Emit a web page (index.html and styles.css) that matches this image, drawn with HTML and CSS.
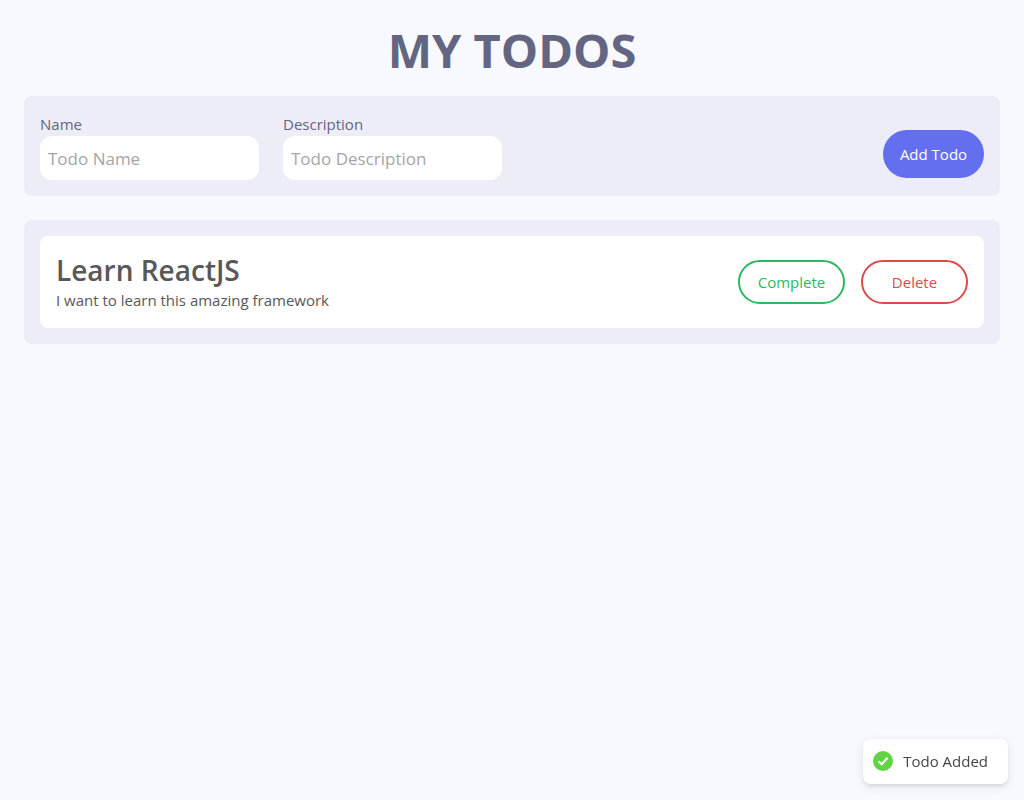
FILE: index.html
```html
<!DOCTYPE html>
<html lang="en">
<head>
<meta charset="utf-8">
<title>My Todos</title>
<link rel="stylesheet" href="styles.css">
</head>
<body>
<main class="app">
  <h1 class="title">MY TODOS</h1>
  <form class="panel todo-form">
    <div class="fields">
      <div class="field">
        <label for="name">Name</label>
        <input id="name" type="text" placeholder="Todo Name">
      </div>
      <div class="field">
        <label for="description">Description</label>
        <input id="description" type="text" placeholder="Todo Description">
      </div>
    </div>
    <button class="button add" type="button">Add Todo</button>
  </form>
  <section class="panel">
    <article class="todo">
      <div class="todo-text">
        <h2>Learn ReactJS</h2>
        <p>I want to learn this amazing framework</p>
      </div>
      <div class="actions">
        <button class="button outline complete" type="button">Complete</button>
        <button class="button outline delete" type="button">Delete</button>
      </div>
    </article>
  </section>
</main>
<div class="toast" role="status">
  <svg class="toast-icon" viewBox="0 0 20 20" aria-hidden="true">
    <circle cx="10" cy="10" r="10" fill="#61d345"/>
    <path d="M5.5 10.2 L8.6 13.2 L14.6 6.8" fill="none" stroke="#fff" stroke-width="2"/>
  </svg>
  <span>Todo Added</span>
</div>
</body>
</html>
```
FILE: styles.css
```css
* { box-sizing: border-box; }
body {
  margin: 0;
  min-height: 100vh;
  background: #f8f9ff;
  color: #646681;
  font-family: "Segoe UI", "Open Sans", "Noto Sans", sans-serif;
  font-size: 15px;
  line-height: 24px;
}
h1, h2, p { margin: 0; }
.app { padding: 24px; }
.title {
  margin-bottom: 20px;
  font-size: 47px;
  font-weight: 700;
  line-height: 52px;
  text-align: center;
}
.panel {
  margin-bottom: 24px;
  padding: 16px;
  border-radius: 8px;
  background: #ecedf6;
}
.todo-form {
  display: flex;
  align-items: center;
  justify-content: space-between;
}
.fields { display: flex; gap: 24px; }
.field { display: flex; flex-direction: column; }
.field input {
  width: 219px;
  height: 44px;
  padding: 8px;
  border: 0;
  border-radius: 12px;
  background: #fff;
  color: #585858;
  font: inherit;
  font-size: 17px;
}
.field input::placeholder { color: #a5a5a8; opacity: 1; }
.button {
  border-radius: 24px;
  font: inherit;
  cursor: pointer;
}
.add {
  min-width: 101px;
  height: 48px;
  margin-top: 16px;
  padding: 0 16px;
  border: 0;
  background: #646ff0;
  color: #fff;
}
.todo {
  display: flex;
  align-items: center;
  justify-content: space-between;
  padding: 16px;
  border-radius: 8px;
  background: #fff;
  color: #585858;
}
.todo h2 { font-size: 28px; font-weight: 600; line-height: 36px; }
.actions { display: flex; gap: 16px; }
.outline {
  width: 107px;
  height: 44px;
  border: 2px solid currentColor;
  background: #fff;
}
.complete { color: #29b95f; }
.delete { color: #db4a4a; }
.toast {
  position: fixed;
  right: 16px;
  bottom: 16px;
  display: flex;
  align-items: center;
  gap: 10px;
  padding: 10px 20px 11px 10px;
  border-radius: 8px;
  background: #fff;
  color: #464646;
  box-shadow: 0 3px 10px rgba(0, 0, 0, 0.1), 0 3px 3px rgba(0, 0, 0, 0.05);
}
.toast-icon { width: 20px; height: 20px; }
```
